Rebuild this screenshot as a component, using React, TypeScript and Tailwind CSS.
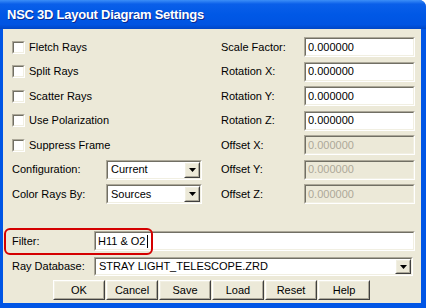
import React from "react";

const font = "font-['Liberation_Sans',Arial,sans-serif]";

function Sunken({ className = "", inner = "bg-white", children }: { className?: string; inner?: string; children?: React.ReactNode }) {
  return (
    <div className={`border border-t-[#aca899] border-l-[#aca899] border-b-white border-r-white ${className}`}>
      <div className={`h-full border border-t-[#716f64] border-l-[#716f64] border-b-[#f1efe2] border-r-[#f1efe2] ${inner}`}>
        {children}
      </div>
    </div>
  );
}

function Raised({ className = "", children }: { className?: string; children?: React.ReactNode }) {
  return (
    <div className={`border border-t-white border-l-white border-b-[#404040] border-r-[#404040] bg-[#ece9d8] ${className}`}>
      <div className="h-full border border-t-[#f1efe2] border-l-[#f1efe2] border-b-[#aca899] border-r-[#aca899] flex items-center justify-center">
        {children}
      </div>
    </div>
  );
}

function Arrow() {
  return (
    <Raised className="w-[16px] h-full shrink-0">
      <svg width="7" height="4" viewBox="0 0 7 4">
        <path d="M0 0h7L3.5 4z" fill="#000" />
      </svg>
    </Raised>
  );
}

function Check({ label }: { label: string }) {
  return (
    <div className="flex items-center h-[20px]">
      <Sunken className="w-[13px] h-[13px]" inner="bg-white" />
      <span className="ml-[4px]">{label}</span>
    </div>
  );
}

function Field({ value, disabled }: { value: string; disabled?: boolean }) {
  return (
    <Sunken className="w-[111px] h-[20px]" inner={disabled ? "bg-[#ece9d8]" : "bg-white"}>
      <div className={`h-full flex items-center pl-[2px] ${disabled ? "text-[#aca899]" : "text-black"}`}>{value}</div>
    </Sunken>
  );
}

function Dropdown({ value, className }: { value: string; className: string }) {
  return (
    <Sunken className={className}>
      <div className="h-full flex items-center">
        <span className="flex-1 pl-[3px]">{value}</span>
        <Arrow />
      </div>
    </Sunken>
  );
}

const right = [
  ["Scale Factor:", false],
  ["Rotation X:", false],
  ["Rotation Y:", false],
  ["Rotation Z:", false],
  ["Offset X:", true],
  ["Offset Y:", true],
  ["Offset Z:", true],
] as const;

const checks = ["Fletch Rays", "Split Rays", "Scatter Rays", "Use Polarization", "Suppress Frame"];

export default function App() {
  return (
    <div className={`w-[426px] h-[308px] bg-[#0055e5] flex flex-col overflow-hidden rounded-tr-[7px] ${font} text-[11px] text-black`}>
      {/* Title bar */}
      <div className="h-[29px] shrink-0 flex items-center pl-[7px] bg-[linear-gradient(to_bottom,#3c8ef7_0%,#0a5fe9_14%,#0058e6_50%,#0054e2_85%,#0046c6_100%)]">
        <span className="text-white font-bold text-[13px] tracking-[-0.25px] [text-shadow:1px_1px_0_#0c2a8f]">
          NSC 3D Layout Diagram Settings
        </span>
      </div>

      {/* Client */}
      <div className="flex-1 ml-[3px] mr-[5px] mb-[5px] bg-[#ece9d8] pt-[8px] pl-[9px] pr-[6px] flex flex-col">
        <div className="grid grid-cols-[209px_83px_111px] gap-y-[4.5px]">
          {right.map(([label, dis], i) => (
            <React.Fragment key={label}>
              {i < 5 ? (
                <Check label={checks[i]} />
              ) : (
                <div className="flex items-center h-[20px]">
                  <span className="w-[94px]">{i === 5 ? "Configuration:" : "Color Rays By:"}</span>
                  <Dropdown value={i === 5 ? "Current" : "Sources"} className="w-[96px] h-[20px]" />
                </div>
              )}
              <div className="flex items-center h-[20px]">{label}</div>
              <Field value="0.000000" disabled={dis} />
            </React.Fragment>
          ))}
        </div>

        {/* Filter */}
        <div className="relative mt-[27px] flex items-center h-[20px]">
          <span className="w-[82px]">Filter:</span>
          <Sunken className="flex-1 h-[20px]">
            <div className="h-full flex items-center pl-[2px]">
              H11 &amp; O2<span className="inline-block w-px h-[13px] bg-black ml-px" />
            </div>
          </Sunken>
          <div className="absolute left-[-8px] top-[-3px] w-[149px] h-[27px] border-2 border-[#d40000] rounded-[6px]" />
        </div>

        {/* Ray database */}
        <div className="mt-[6px] flex items-center h-[19px]">
          <span className="w-[82px]">Ray Database:</span>
          <Dropdown value="STRAY LIGHT_TELESCOPE.ZRD" className="flex-1 h-[19px] mr-[2px]" />
        </div>

        {/* Buttons */}
        <div className="mt-[4px] flex gap-[1px] ml-[41px] h-[20px]">
          {["OK", "Cancel", "Save", "Load", "Reset", "Help"].map((b) => (
            <Raised key={b} className="w-[52px] h-[20px]">
              <span>{b}</span>
            </Raised>
          ))}
        </div>
      </div>
    </div>
  );
}
